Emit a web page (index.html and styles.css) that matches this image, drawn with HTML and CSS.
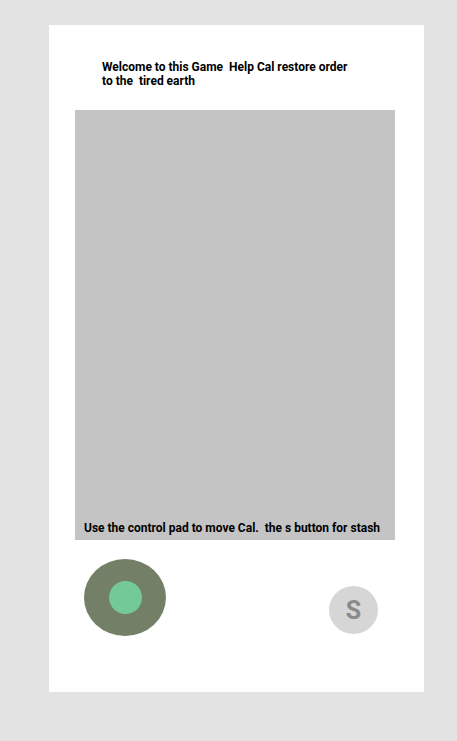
FILE: index.html
```html
<!DOCTYPE html>
<html>
<head>
<meta charset="utf-8">
<link rel="stylesheet" href="styles.css">
</head>
<body>
<div class="card">
  <div class="intro">Welcome to this Game  Help Cal restore order
to the  tired earth</div>
  <div class="screen">
    <div class="hint">Use the control pad to move Cal.  the s button for stash</div>
  </div>
  <div class="controls">
    <div class="pad"><div class="knob"></div></div>
    <div class="stash">S</div>
  </div>
</div>
</body>
</html>
```
FILE: styles.css
```css
html, body {
  margin: 0;
  padding: 0;
  background: #e3e3e3;
  width: 457px;
  height: 741px;
  overflow: hidden;
  font-family: Roboto, "Liberation Sans", sans-serif;
}
.card {
  margin: 25px 0 0 49px;
  width: 375px;
  height: 667px;
  background: #ffffff;
  display: flex;
  flex-direction: column;
}
.intro {
  white-space: pre-wrap;
  font-size: 12px;
  font-weight: 700;
  line-height: 14px;
  color: #000;
  padding: 35px 0 0 53px;
  height: 50px;
}
.screen {
  margin-left: 26px;
  width: 320px;
  height: 430px;
  background: #c4c4c4;
  display: flex;
  flex-direction: column;
  justify-content: flex-end;
}
.hint {
  white-space: pre-wrap;
  font-size: 12px;
  font-weight: 700;
  line-height: 14px;
  color: #000;
  padding: 0 0 5px 9px;
}
.controls {
  display: flex;
  align-items: flex-start;
  padding: 19px 0 0 35px;
}
.pad {
  width: 82px;
  height: 77px;
  border-radius: 50%;
  background: #737f66;
  display: flex;
  align-items: center;
  justify-content: center;
}
.knob {
  width: 33px;
  height: 33px;
  border-radius: 50%;
  background: #74c999;
}
.stash {
  margin: 27px 0 0 163px;
  width: 49px;
  height: 48px;
  border-radius: 50%;
  background: #d6d6d6;
  color: #8a8a8a;
  font-size: 25px;
  font-weight: 700;
  display: flex;
  align-items: center;
  justify-content: center;
}
```
